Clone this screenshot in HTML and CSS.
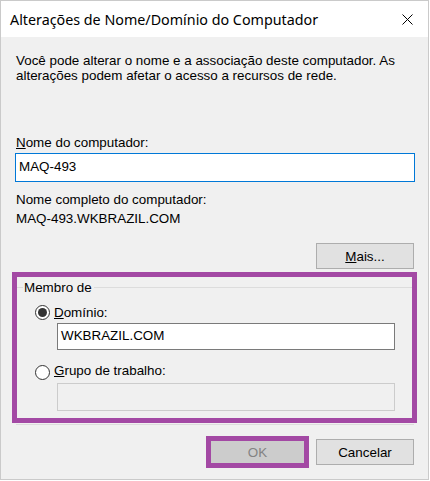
FILE: index.html
```html
<!DOCTYPE html>
<html lang="pt-BR">
<head>
<meta charset="utf-8">
<title>Alterações de Nome/Domínio do Computador</title>
<link rel="stylesheet" href="styles.css">
</head>
<body>
<div class="window">
  <div class="titlebar">
    <span class="title">Alterações de Nome/Domínio do Computador</span>
    <svg class="close" width="11" height="11" viewBox="0 0 11 11"><path d="M0.5 0.5 L10.5 10.5 M10.5 0.5 L0.5 10.5" stroke="#000" stroke-width="1" fill="none"/></svg>
  </div>
  <div class="content">
    <p class="desc">Você pode alterar o nome e a associação deste computador. As alterações podem afetar o acesso a recursos de rede.</p>
    <div class="label label-name"><u>N</u>ome do computador:</div>
    <div class="input focused">MAQ-493</div>
    <div class="label label-full">Nome completo do computador:</div>
    <div class="label label-fullvalue">MAQ-493.WKBRAZIL.COM</div>
    <div class="btn btn-more"><u>M</u>ais...</div>
    <div class="highlight">
      <div class="legend"><span>Membro de</span></div>
      <div class="radio-row row-domain">
        <span class="radio checked"></span><span class="radio-label"><u>D</u>omínio:</span>
      </div>
      <div class="input sub">WKBRAZIL.COM</div>
      <div class="radio-row row-group">
        <span class="radio"></span><span class="radio-label"><u>G</u>rupo de trabalho:</span>
      </div>
      <div class="input sub disabled"></div>
    </div>
    <div class="group-bottom"></div>
    <div class="actions">
      <div class="btn btn-ok">OK</div>
      <div class="btn btn-cancel">Cancelar</div>
    </div>
  </div>
</div>
</body>
</html>
```

FILE: styles.css
```css
* { box-sizing: border-box; }
html, body { margin: 0; padding: 0; background: #ffffff; }
body {
  font-family: "Liberation Sans", Arial, sans-serif;
  font-size: 13.4px;
  color: #000;
}
.window {
  width: 429px;
  height: 480px;
  border: 1px solid #cacaca;
  background: #f0f0f0;
  display: flex;
  flex-direction: column;
}
.titlebar {
  height: 36px;
  background: #ffffff;
  display: flex;
  align-items: center;
  justify-content: space-between;
  padding: 0 15px 0 9px;
}
.title {
  font-family: "Noto Sans", "Open Sans", sans-serif;
  font-size: 14.3px;
  color: #000;
}
.close { display: block; }
.content {
  display: flex;
  flex-direction: column;
  padding: 0 13px 0 14px;
}
.desc {
  margin: 16px 0 0 0;
  padding-left: 1px;
  line-height: 15px;
}
.label { line-height: 15px; padding-left: 1px; }
.label-name { margin-top: 52px; }
.label-full { margin-top: 10px; }
.label-fullvalue { margin-top: 4px; }
.input {
  height: 29px;
  background: #fff;
  border: 1px solid #7a7a7a;
  padding: 0 3px;
  display: flex;
  align-items: center;
  line-height: 15px;
}
.input.focused {
  margin-top: 3px;
  border-color: #0078d7;
  padding-bottom: 3px;
}
.btn {
  background: #e1e1e1;
  border: 1px solid #adadad;
  display: flex;
  align-items: center;
  justify-content: center;
  width: 98px;
  height: 26px;
}
.btn-more {
  align-self: flex-end;
  margin: 17px 1px 0 0;
}
.highlight {
  margin: 3px -2px 0 -3px;
  height: 151px;
  border: 5px solid #a349a4;
  display: flex;
  flex-direction: column;
}
.legend {
  margin-top: 3px;
  display: flex;
  align-items: center;
  line-height: 15px;
}
.legend::before {
  content: "";
  width: 6px;
  border-top: 1px solid #dcdcdc;
}
.legend::after {
  content: "";
  flex: 1;
  border-top: 1px solid #dcdcdc;
}
.legend span { padding: 0 2px 0 1px; }
.radio-row {
  display: flex;
  align-items: center;
  height: 16px;
  margin-left: 18px;
}
.row-domain { margin-top: 9px; }
.row-group { margin-top: 12px; }
.radio {
  width: 15px;
  height: 15px;
  border-radius: 50%;
  border: 1px solid #333333;
  background: #fff;
  display: flex;
  align-items: center;
  justify-content: center;
  flex: none;
}
.row-group .radio { margin-top: 4px; }
.radio.checked::after {
  content: "";
  width: 9px;
  height: 9px;
  border-radius: 50%;
  background: #333333;
}
.radio-label { margin-left: 4px; }
.input.sub {
  margin: 3px 0 0 40px;
  width: 338px;
  height: 27px;
  padding-bottom: 2px;
}
.input.sub.disabled {
  margin-top: 5px;
  height: 28px;
  background: #f0f0f0;
  border-color: #cccccc;
}
.group-bottom {
  margin: 1px 1px 0 1px;
  height: 1px;
  background: #dcdcdc;
}
.actions {
  display: flex;
  justify-content: flex-end;
  align-items: center;
  gap: 7px;
  margin: 11px 1px 0 0;
}
.btn-ok {
  width: 103px;
  height: 32px;
  border: 5px solid #a349a4;
  background: #cccccc;
  color: #838383;
}
```
